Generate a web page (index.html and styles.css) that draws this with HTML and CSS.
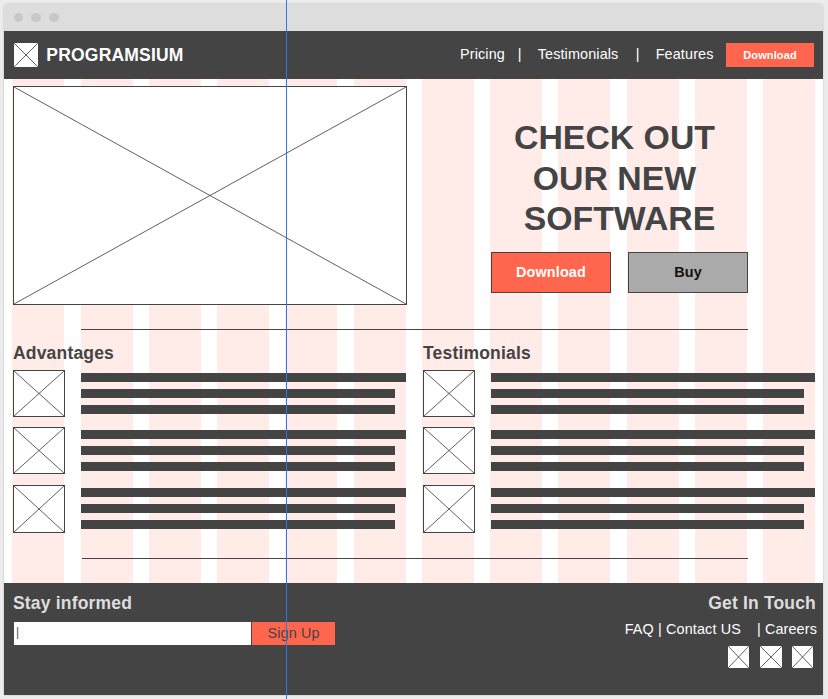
FILE: index.html
```html
<!DOCTYPE html>
<html lang="en">
<head>
<meta charset="utf-8">
<title>Programsium</title>
<link rel="stylesheet" href="styles.css">
</head>
<body>
<svg class="defs" width="0" height="0" aria-hidden="true">
  <symbol id="cross" viewBox="0 0 100 100" preserveAspectRatio="none">
    <path d="M0 0L100 100M100 0L0 100" fill="none" stroke="#444" stroke-opacity=".85" vector-effect="non-scaling-stroke"/>
  </symbol>
</svg>
<div class="window">
  <div class="titlebar"><i></i><i></i><i></i></div>
  <header class="header">
    <svg class="logo"><use href="#cross"/></svg>
    <div class="brand">PROGRAMSIUM</div>
    <nav class="nav">
      <span>Pricing</span><span>|</span><span>Testimonials</span><span>|</span><span>Features</span>
    </nav>
    <button class="nav-btn">Download</button>
  </header>
  <main class="main">
    <div class="columns"><i></i><i></i><i></i><i></i><i></i><i></i><i></i><i></i><i></i><i></i><i></i><i></i></div>
    <div class="content">
      <section class="hero">
        <svg class="hero-img"><use href="#cross"/></svg>
        <div class="pitch">
          <h1><span>CHECK OUT</span><span>OUR NEW</span><span class="last">SOFTWARE</span></h1>
          <div class="actions">
            <button class="btn primary">Download</button>
            <button class="btn">Buy</button>
          </div>
        </div>
      </section>
      <div class="rule"></div>
      <section class="lists">
        <div class="list">
          <h2>Advantages</h2>
          <div class="item"><svg><use href="#cross"/></svg><div class="lines"><b></b><b></b><b></b></div></div>
          <div class="item"><svg><use href="#cross"/></svg><div class="lines"><b></b><b></b><b></b></div></div>
          <div class="item tall"><svg><use href="#cross"/></svg><div class="lines"><b></b><b></b><b></b></div></div>
        </div>
        <div class="list right">
          <h2>Testimonials</h2>
          <div class="item"><svg><use href="#cross"/></svg><div class="lines"><b></b><b></b><b></b></div></div>
          <div class="item"><svg><use href="#cross"/></svg><div class="lines"><b></b><b></b><b></b></div></div>
          <div class="item tall"><svg><use href="#cross"/></svg><div class="lines"><b></b><b></b><b></b></div></div>
        </div>
      </section>
      <div class="rule bottom"></div>
    </div>
  </main>
  <footer class="footer">
    <div class="signup">
      <h2>Stay informed</h2>
      <div class="form"><div class="field"><span>|</span></div><button class="signup-btn">Sign Up</button></div>
    </div>
    <div class="contact">
      <h2>Get In Touch</h2>
      <div class="links"><span>FAQ | Contact US</span><span>| Careers</span></div>
      <div class="social"><svg><use href="#cross"/></svg><svg><use href="#cross"/></svg><svg><use href="#cross"/></svg></div>
    </div>
  </footer>
</div>
<div class="guide"></div>
</body>
</html>
```
FILE: styles.css
```css
* { box-sizing: border-box; }
body {
  margin: 0;
  padding: 4px 5px 4px 4px;
  height: 699px;
  overflow: hidden;
  background: #ececec;
  font-family: "Liberation Sans", Arial, sans-serif;
  font-size: 14.4px;
  letter-spacing: 0.13px;
  color: #444;
}
svg { display: block; flex: none; background: #fff; }
.defs { position: absolute; }
h1, h2 { margin: 0; }
h2 { font-size: 17.5px; line-height: 20px; letter-spacing: 0.18px; white-space: nowrap; }
button { font: inherit; letter-spacing: inherit; padding: 0; border: 0; border-radius: 0; }

.window {
  width: 819px;
  height: 691px;
  background: #fff;
  border-radius: 4px 4px 0 0;
  overflow: hidden;
  box-shadow: 0 0 2px rgba(0, 0, 0, 0.25);
}
.titlebar { display: flex; gap: 9px; height: 27px; padding: 9px 0 0 10px; background: #ddd; }
.titlebar i { width: 9px; height: 9px; border-radius: 50%; background: #c8c8c8; }
.titlebar i:nth-child(2) { width: 10px; margin-left: -1px; }
.titlebar i:nth-child(3) { width: 10px; margin-left: -1px; }

.header { display: flex; align-items: center; height: 48px; padding: 0 9px 0 10px; background: #444; color: #fff; }
.logo { width: 24px; height: 24px; border-radius: 1px; }
.brand { width: 413px; padding-left: 8.3px; font-size: 17.5px; font-weight: bold; letter-spacing: 0.2px; }
.nav { display: grid; grid-template-columns: 57.7px 20px 98px 20px 70px; width: 266px; margin-left: 9px; padding-bottom: 2px; line-height: 18px; white-space: nowrap; }
.nav-btn { width: 88px; height: 24px; margin-left: auto; background: #ff664d; color: #fff; font-size: 11px; font-weight: bold; }

.main { display: grid; height: 504px; }
.columns, .content { grid-area: 1 / 1; }
.columns { display: flex; gap: 16.26px; padding-left: 8.4px; }
.columns i { flex: none; width: 52px; background: #ffebe8; }
.content { position: relative; padding: 7px 8px 0 9px; }

.hero { display: flex; height: 219px; }
.hero-img { width: 394px; height: 219px; border: 1px solid #444; }
.pitch { width: 257px; margin-left: 84px; padding-top: 31px; }
h1 { font-size: 33.8px; line-height: 40.5px; letter-spacing: 0; text-align: center; height: 135px; margin-left: -10px; }
h1 span { display: block; }
h1 .last { padding-left: 10px; }
.actions { display: flex; justify-content: space-between; }
.btn { width: 120px; height: 41px; padding-bottom: 2px; border: 1px solid #444; background: #aaa; color: #111; font-weight: bold; }
.btn.primary { background: #ff664d; color: #fff; }

.rule { width: 667px; height: 1px; margin: 24px 0 0 68px; background: #444; }
.rule.bottom { width: 666px; margin: 25px 0 0 69px; }
.lists { display: flex; gap: 17px; padding-top: 13px; }
.list { width: 393px; }
.list.right { width: 392px; }
.list h2 { height: 27px; }
.item { display: flex; height: 47px; margin-bottom: 10px; }
.item svg { width: 52px; height: 100%; border: 1px solid #444; }
.item.tall { height: 48px; margin: 11px 0 0; }
.lines { flex: 1; display: flex; flex-direction: column; gap: 7px; margin-left: 16px; padding-top: 3px; }
.lines b { height: 9px; margin-right: 11px; background: #444; }
.lines b:first-child { margin-right: 0; }

.footer { display: flex; justify-content: space-between; height: 112px; padding: 10px 6px 0 9px; background: #444; color: #fff; }
.footer h2 { color: #ddd; }
.form { display: flex; gap: 1px; margin: 9px 0 0 1px; height: 23px; }
.field { width: 237px; padding-left: 2px; background: #fff; color: #444; font-size: 12px; line-height: 21px; }
.field span { opacity: 0.9; }
.signup-btn { width: 83px; padding-bottom: 2px; background: #ff664d; color: #444; }
.contact { display: flex; flex-direction: column; align-items: flex-end; }
.links { display: flex; gap: 16px; margin-top: 7px; line-height: 18px; white-space: nowrap; }
.social { display: flex; gap: 11px; margin: 8px 4px 0 0; }
.social svg { width: 21px; height: 22px; border-radius: 1px; }
.social svg:nth-child(2) { width: 22px; margin-right: -1px; }
.contact h2 { margin-right: 1px; }

/* vertical alignment guide drawn over the whole canvas */
.guide { position: absolute; top: 0; bottom: 0; left: 286px; width: 1px; background: #2f77e6; }
```
